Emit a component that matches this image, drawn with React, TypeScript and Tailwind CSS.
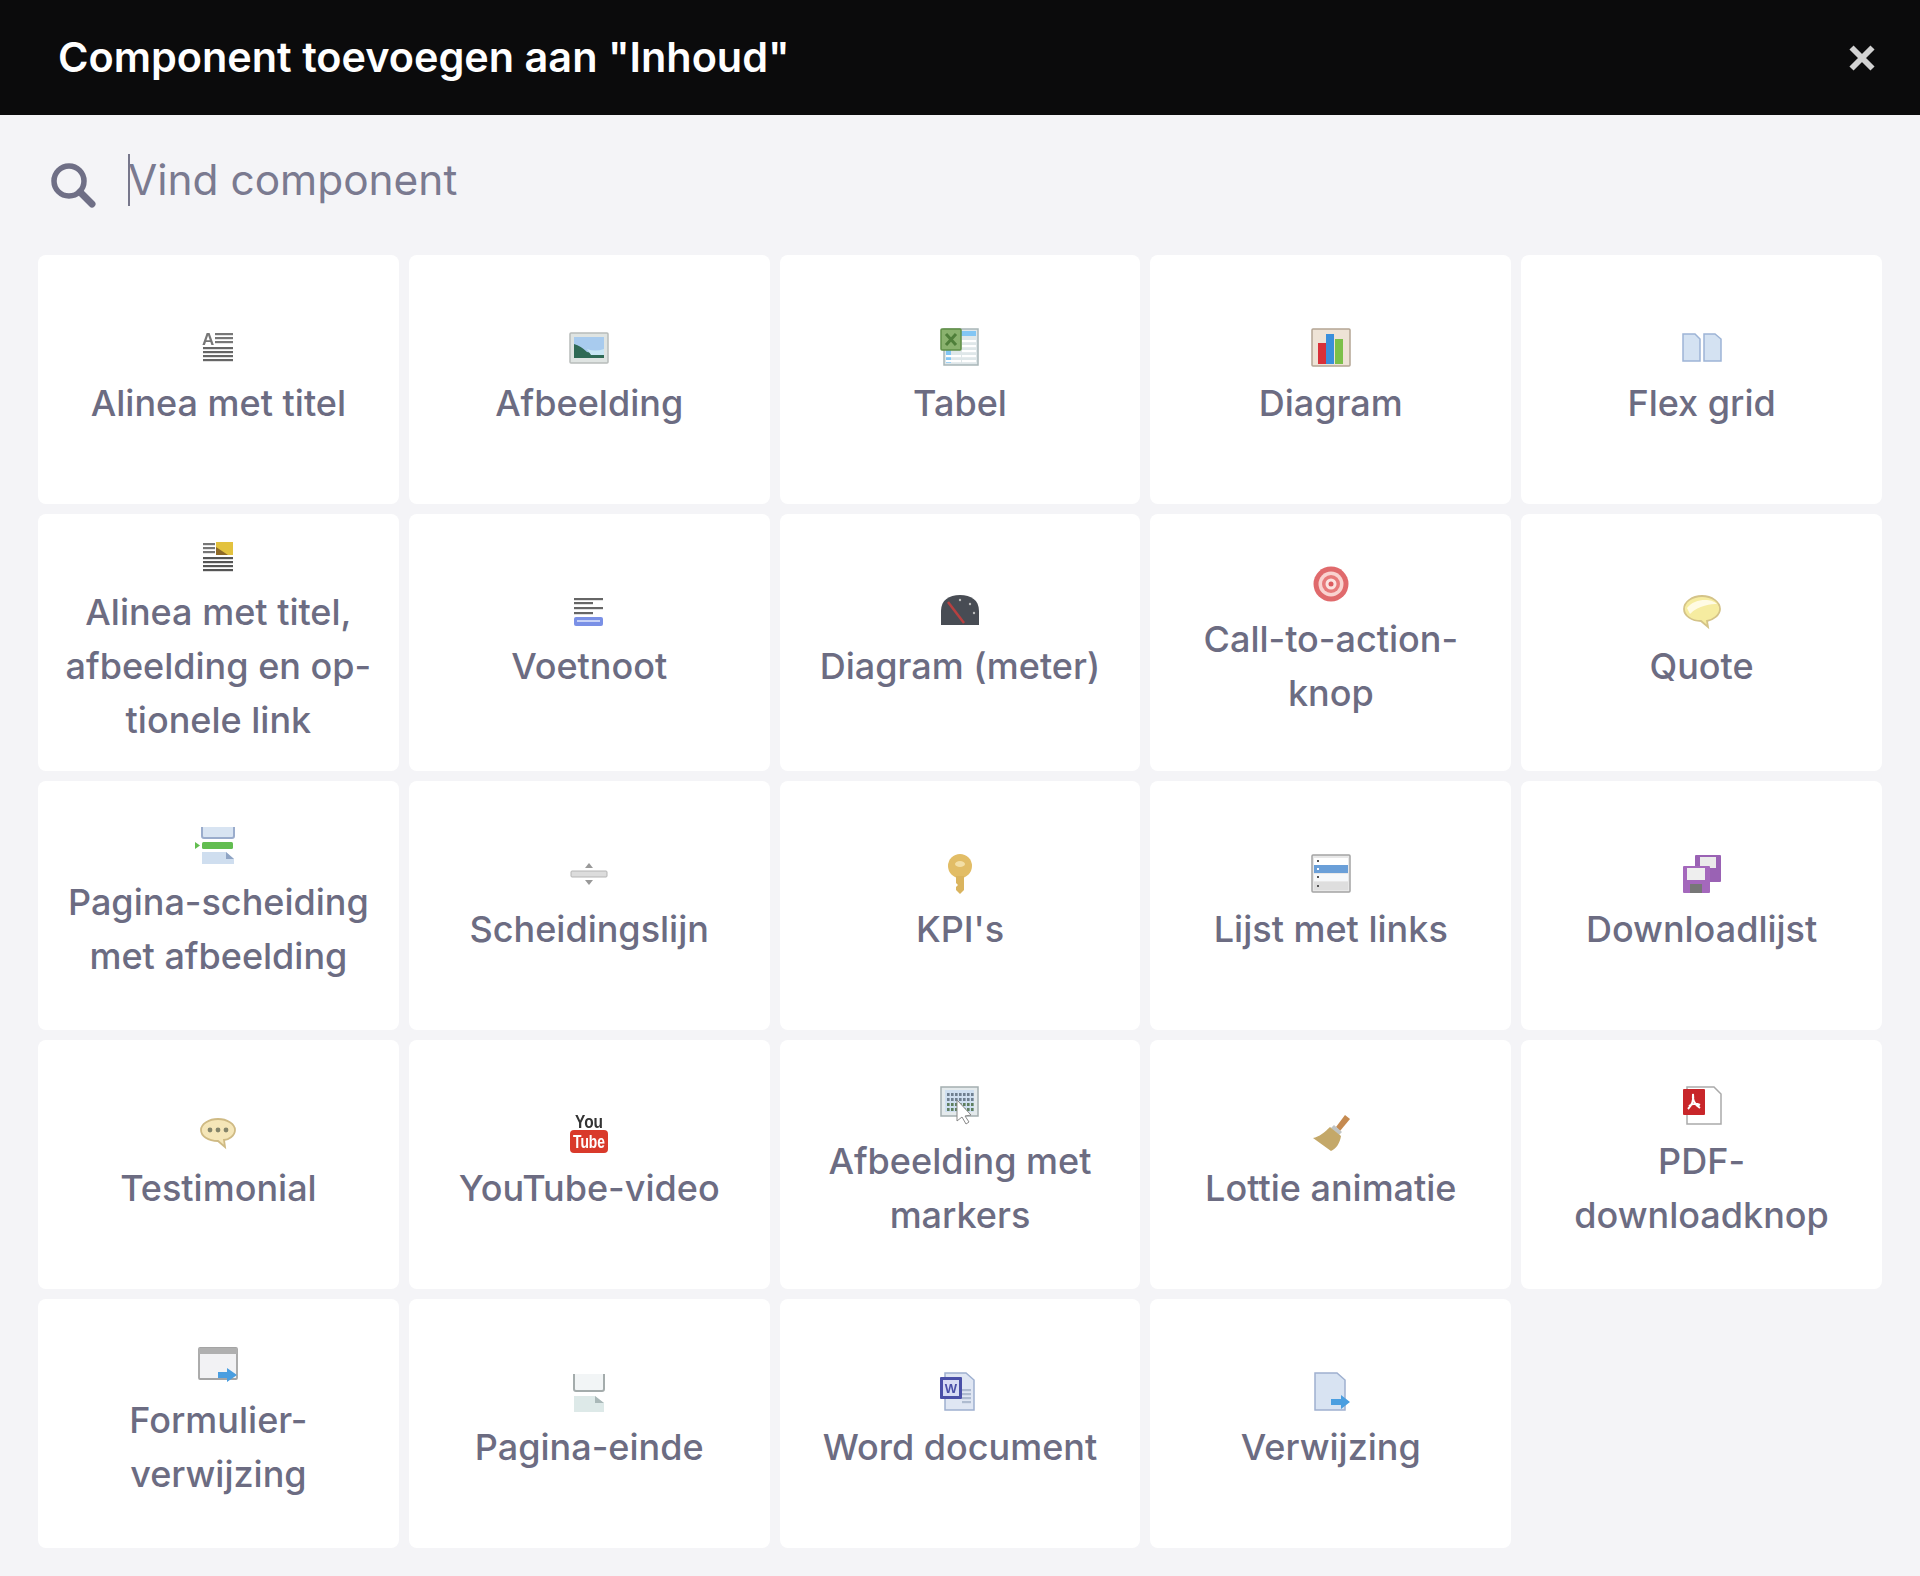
import React from "react";

const I = ({ children }: { children: React.ReactNode }) => (
  <svg viewBox="0 0 40 40" className="w-10 h-10 blur-[0.7px] overflow-visible shrink-0">{children}</svg>
);

const Lines = ({ x, w, ys, c = "#777" }: { x: number; w: number; ys: number[]; c?: string }) => (
  <>{ys.map((y) => <rect key={y} x={x} y={y} width={w} height={2.2} fill={c} />)}</>
);

const Dots = () => (
  <>
    {[7, 12, 17, 22].map((y) =>
      [7, 11, 15, 19, 23, 27, 31].map((x) => (
        <rect key={`${x}-${y}`} x={x} y={y} width={2.6} height={3} fill={y > 15 ? "#5f7f5f" : "#6f7f8f"} />
      ))
    )}
  </>
);

const icons: Record<string, React.ReactNode> = {
  para: <I><text x="4" y="17" fontSize="17" fontWeight="700" fontFamily="Liberation Sans" fill="#777">A</text><Lines x={17} w={18} ys={[5,9,13]} /><Lines x={5} w={30} ys={[19,23,27,31]} c="#666" /></I>,
  image: <I><rect x="1" y="5" width="38" height="30" rx="1" fill="#dfe4e2" stroke="#b8bcba" strokeWidth="1.5" /><rect x="5" y="9" width="30" height="21" fill="#a8cbee" /><path d="M5 16 Q12 18 18 24 Q26 26 35 25 V30 H5Z" fill="#2f6a55" /><path d="M18 21 Q26 24 35 21 V27 H22Z" fill="#c8e6f4" /></I>,
  table: <I><rect x="4" y="1" width="34" height="36" fill="#dfe7e9" stroke="#a9b6b8" strokeWidth="1.5" /><rect x="6" y="3" width="30" height="5" fill="#82c6f4" /><rect x="6" y="8" width="5" height="27" fill="#82c6f4" /><Lines x={22} w={14} ys={[12,17,22,27,32]} c="#fff" /><Lines x={6} w={15} ys={[27,32]} c="#fff" /><rect x="1" y="1" width="20" height="21" rx="1" fill="#8ab26e" stroke="#5f8e45" strokeWidth="1.5" /><path d="M6 6 L16 17 M16 6 L6 17" stroke="#4f7f3a" strokeWidth="3" /></I>,
  chart: <I><rect x="1" y="1" width="38" height="37" rx="1" fill="#eee3d6" stroke="#b4a594" strokeWidth="1.5" /><rect x="7" y="15" width="8" height="21" fill="#d8303a" /><rect x="15" y="6" width="8" height="30" fill="#3a8fdc" /><rect x="24" y="11" width="8" height="25" fill="#7cc04a" /></I>,
  flex: <I><path d="M1 6 H13 L18 11 V33 H1Z" fill="#d4e2f2" stroke="#9db4d6" strokeWidth="1.5" /><path d="M22 6 H33 L39 11 V33 H22Z" fill="#d4e2f2" stroke="#9db4d6" strokeWidth="1.5" /></I>,
  paraimg: <I><Lines x={5} w={12} ys={[6,10,14]} /><rect x="18" y="5" width="17" height="13" fill="#e3c23e" /><path d="M18 18 V10 L30 18Z" fill="#8f6a28" /><Lines x={5} w={30} ys={[20,24,28,32]} c="#555" /></I>,
  note: <I><Lines x={5} w={29} ys={[7,16]} c="#666" /><Lines x={5} w={19} ys={[11,21]} c="#666" /><rect x="5" y="26" width="29" height="9" rx="2" fill="#7a90e6" /><rect x="8" y="29" width="23" height="2" fill="#c7d2f7" /></I>,
  gauge: <I><path d="M1 34 V20 C1 9 9 4 20 4 C31 4 39 9 39 20 V34Z" fill="#484c54" /><path d="M8 11 L24 32" stroke="#b84040" strokeWidth="2.5" /><circle cx="20" cy="9" r="1.2" fill="#bbb" /><circle cx="30" cy="13" r="1.2" fill="#bbb" /><circle cx="34" cy="22" r="1.2" fill="#bbb" /></I>,
  target: <I><circle cx="20" cy="20" r="17.5" fill="#e06a6c" /><circle cx="20" cy="20" r="12.5" fill="#f9d3d0" /><circle cx="20" cy="20" r="9" fill="#e77a7a" /><circle cx="20" cy="20" r="5.5" fill="#fbe2df" /><circle cx="20" cy="20" r="2.5" fill="#dc5a5e" /></I>,
  quote: <I><path d="M20 5 C30 5 38 11 38 18 C38 24 31 29 25 30 L26 36 L19 30 C10 30 2 25 2 18 C2 11 10 5 20 5Z" fill="#f6eca0" stroke="#d4c388" strokeWidth="1.8" /><path d="M5 17 C12 7 30 7 35 13 C30 13 16 14 8 23Z" fill="#fffbe4" /></I>,
  split: <I><path d="M4 0 V9 Q4 11 6 11 H34 Q36 11 36 9 V0" fill="#d8e4f2" stroke="#9aaccc" strokeWidth="2" /><rect x="4" y="15" width="31" height="7" rx="1.5" fill="#62bd50" /><path d="M-3 15 L2 18.5 L-3 22Z" fill="#62bd50" /><path d="M4 25 H28 L36 32 V37 H4Z" fill="#cfdeef" /><path d="M28 25 V32 H36" fill="#8fa4c4" /></I>,
  rule: <I><path d="M20 9 L24 14 H16Z" fill="#999" /><rect x="2" y="17" width="36" height="6" rx="1" fill="#dcdcdc" stroke="#b4b4b4" /><path d="M20 31 L24 26 H16Z" fill="#999" /></I>,
  key: <I><ellipse cx="20" cy="12" rx="12" ry="12" fill="#e2bd66" /><ellipse cx="20" cy="10" rx="5" ry="3" fill="#f3dfa6" /><path d="M16 22 H24 V36 L20 40 L16 36 V33 L18 31 L16 29Z" fill="#dab45e" /></I>,
  list: <I><rect x="1" y="1" width="38" height="37" rx="1" fill="#e8e8e8" stroke="#a4a4a4" strokeWidth="1.5" /><rect x="3" y="4" width="34" height="7" fill="#fff" /><rect x="3" y="11" width="34" height="8" fill="#6a9fd8" /><rect x="3" y="20" width="34" height="7" fill="#f6f8fa" /><rect x="3" y="28" width="34" height="8" fill="#dedede" /><rect x="6" y="6" width="2" height="2" fill="#555" /><rect x="6" y="14" width="2" height="2" fill="#fff" /><rect x="6" y="22" width="2" height="2" fill="#555" /><rect x="6" y="31" width="2" height="2" fill="#555" /></I>,
  dl: <I><rect x="13" y="1" width="26" height="27" rx="1" fill="#9a62b4" /><rect x="18" y="3" width="16" height="11" fill="#eaeaea" /><rect x="1" y="12" width="27" height="27" rx="1" fill="#a468bc" /><rect x="5" y="14" width="18" height="12" fill="#eee" /><rect x="8" y="30" width="12" height="9" fill="#777" /></I>,
  chat: <I><path d="M20 6 C29 6 37 11 37 17 C37 23 30 27 26 27 L27 34 L20 28 C10 28 3 23 3 17 C3 11 11 6 20 6Z" fill="#f5e6b8" stroke="#cfba84" strokeWidth="1.8" /><circle cx="12" cy="17" r="2.4" fill="#84846a" /><circle cx="20" cy="17" r="2.4" fill="#84846a" /><circle cx="28" cy="17" r="2.4" fill="#84846a" /></I>,
  yt: <I><text x="20" y="15" textAnchor="middle" fontSize="18" fontWeight="700" fontFamily="Liberation Sans" textLength="28" lengthAdjust="spacingAndGlyphs" fill="#333">You</text><rect x="1" y="17" width="38" height="23" rx="4" fill="#d93a2b" /><text x="20" y="35" textAnchor="middle" fontSize="18" fontWeight="700" fontFamily="Liberation Sans" textLength="32" lengthAdjust="spacingAndGlyphs" fill="#fff">Tube</text></I>,
  marker: <I><rect x="1" y="1" width="37" height="29" fill="#e4eaec" stroke="#a4aeb0" strokeWidth="1.5" /><rect x="5" y="4" width="29" height="22" fill="#cfdff0" /><Dots /><path d="M17 14 L17 35 L22 31 L26 38 L29 36 L25 30 L31 29Z" fill="#fff" stroke="#888" /></I>,
  brush: <I><path d="M34 2 L39 6 L29 18 L25 14Z" fill="#c58a50" /><path d="M23 12 L31 19 L28 22 L20 15Z" fill="#c0c4c4" /><path d="M19 14 L30 23 C29 30 25 36 20 38 L2 25 C8 24 14 19 19 14Z" fill="#c4a869" /></I>,
  pdf: <I><path d="M5 1 H32 L39 8 V38 H5Z" fill="#fff" stroke="#aaa" strokeWidth="1.5" /><rect x="1" y="3" width="22" height="26" rx="1" fill="#c8262a" /><path d="M11 8 C10 14 12 18 18 22 M11 8 C12 14 10 19 6 23 M7 20 Q12 16 18 19" stroke="#fff" strokeWidth="2" fill="none" /></I>,
  form: <I><rect x="1" y="3" width="38" height="31" rx="1" fill="#f2f2f4" stroke="#a4a4a4" strokeWidth="1.8" /><rect x="1" y="3" width="38" height="6" fill="#b0b0b0" /><path d="M20 27 H29 V23 L39 30 L29 37 V33 H20Z" fill="#4a9ee0" /></I>,
  pagebreak: <I><path d="M5 2 V17 Q5 19 7 19 H33 Q35 19 35 17 V2" fill="#f2f5f6" stroke="#a4acac" strokeWidth="2" /><path d="M5 24 H26 L35 31 V40 H5Z" fill="#dde9e8" /><path d="M26 24 V31 H35" fill="#a9b8b8" /></I>,
  word: <I><path d="M5 1 H26 L34 8 V38 H5Z" fill="#dfe6f3" stroke="#9fb0d0" strokeWidth="1.5" /><Lines x={22} w={9} ys={[17,21,25,29]} c="#aebbd0" /><rect x="0" y="5" width="22" height="22" rx="1" fill="#4a50a8" /><rect x="3" y="8" width="16" height="16" fill="#d7dcf5" /><text x="11" y="21" textAnchor="middle" fontSize="13" fontWeight="700" fontFamily="Liberation Sans" fill="#4a50a8">W</text></I>,
  ref: <I><path d="M4 1 H26 L34 8 V38 H4Z" fill="#d8e3f2" stroke="#9fb0d0" strokeWidth="1.5" /><path d="M20 27 H30 V23 L39 30 L30 37 V33 H20Z" fill="#4a9ee0" /></I>,
};

const items: { label: string; icon: string }[] = [
  { label: "Alinea met titel", icon: "para" },
  { label: "Afbeelding", icon: "image" },
  { label: "Tabel", icon: "table" },
  { label: "Diagram", icon: "chart" },
  { label: "Flex grid", icon: "flex" },
  { label: "Alinea met titel, afbeelding en op-tionele link", icon: "paraimg" },
  { label: "Voetnoot", icon: "note" },
  { label: "Diagram (meter)", icon: "gauge" },
  { label: "Call-to-action-knop", icon: "target" },
  { label: "Quote", icon: "quote" },
  { label: "Pagina-scheiding met afbeelding", icon: "split" },
  { label: "Scheidingslijn", icon: "rule" },
  { label: "KPI's", icon: "key" },
  { label: "Lijst met links", icon: "list" },
  { label: "Downloadlijst", icon: "dl" },
  { label: "Testimonial", icon: "chat" },
  { label: "YouTube-video", icon: "yt" },
  { label: "Afbeelding met markers", icon: "marker" },
  { label: "Lottie animatie", icon: "brush" },
  { label: "PDF-downloadknop", icon: "pdf" },
  { label: "Formulier-verwijzing", icon: "form" },
  { label: "Pagina-einde", icon: "pagebreak" },
  { label: "Word document", icon: "word" },
  { label: "Verwijzing", icon: "ref" },
];

export default function App() {
  return (
    <div className="w-[1920px] h-[1576px] bg-[#f4f4f7] font-['Inter',sans-serif] flex flex-col overflow-hidden">
      <header className="h-[115px] shrink-0 bg-[#0b0b0c] flex items-center justify-between pl-[58px] pr-[44px]">
        <h1 className="text-white text-[41.4px] font-semibold leading-none">Component toevoegen aan "Inhoud"</h1>
        <svg viewBox="0 0 24 24" className="w-[28px] h-[28px]">
          <path d="M3 3 L21 21 M21 3 L3 21" stroke="#d2d2d2" strokeWidth="5" />
        </svg>
      </header>
      <div className="h-[140px] shrink-0 flex items-center pl-[50px] pb-[10px]">
        <svg viewBox="0 0 46 46" className="w-[46px] h-[46px] mt-[9px] shrink-0" fill="none" stroke="#6f6f86">
          <circle cx="19" cy="19" r="15" strokeWidth="5.5" />
          <path d="M30 30 L42 42" strokeWidth="7" strokeLinecap="round" />
        </svg>
        <div className="ml-[32px] w-[2px] h-[52px] bg-[#77778c] shrink-0" />
        <span className="-ml-[2px] text-[42.4px] leading-none text-[#7a7a90] font-normal">Vind component</span>
      </div>
      <main className="grid grid-cols-5 gap-[10px] pl-[38px] pr-[38px]">
        {items.map((it) => (
          <button
            key={it.label}
            className="min-h-[249px] bg-white rounded-[8px] flex flex-col items-center justify-center px-5 pt-[23px] pb-[24px] text-center"
          >
            {icons[it.icon]}
            <span className="mt-[8px] text-[36px] leading-[54px] font-medium text-[#6c6c82]">{it.label}</span>
          </button>
        ))}
      </main>
    </div>
  );
}
